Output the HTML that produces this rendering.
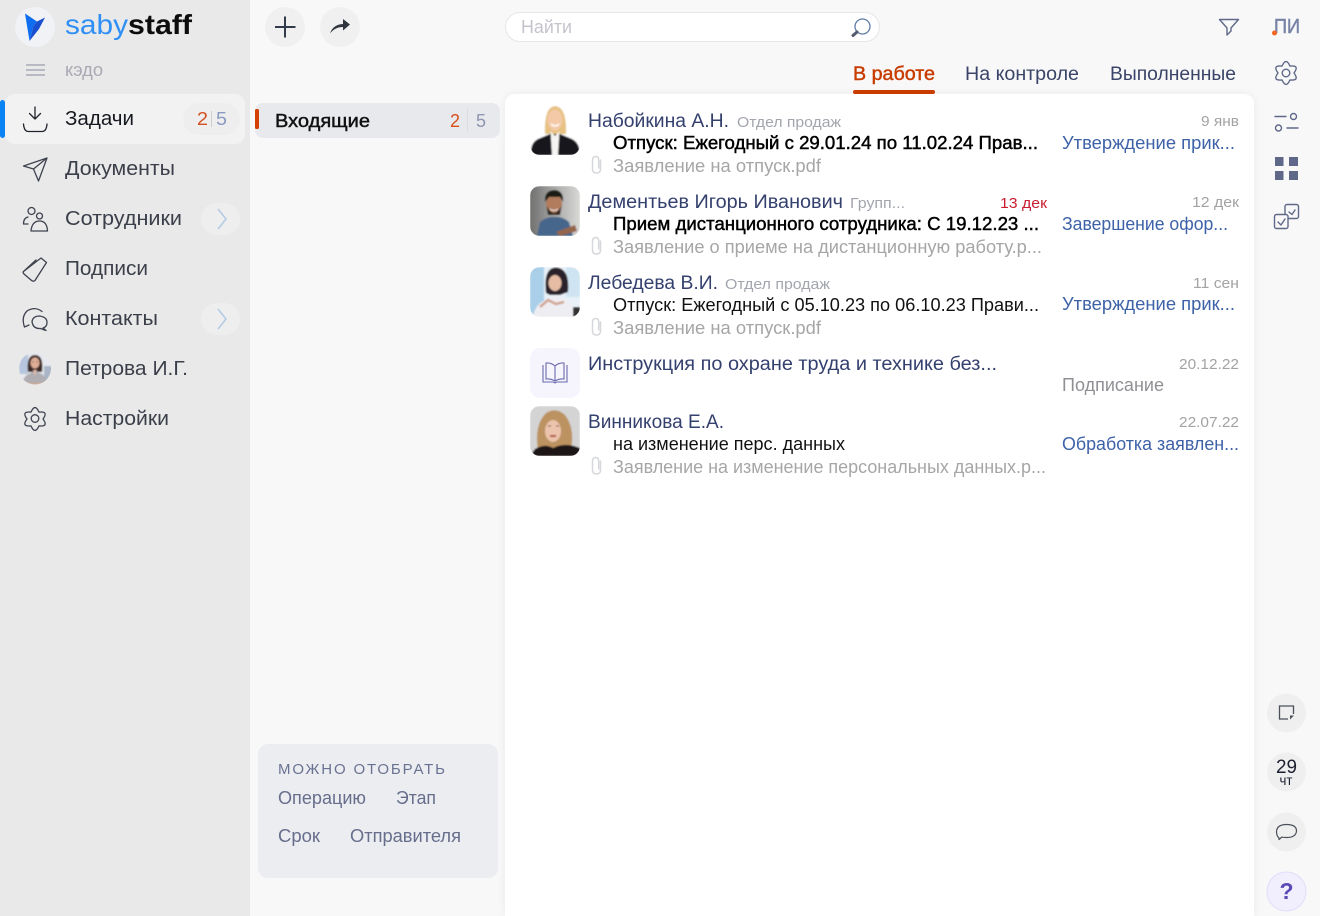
<!DOCTYPE html>
<html lang="ru"><head><meta charset="utf-8"><title>Saby Staff</title>
<style>
html,body{margin:0;padding:0;background:#f8f8f8;width:1320px;height:916px;overflow:hidden}
svg{display:block}
text{font-family:"Liberation Sans",sans-serif;white-space:pre}
.n{font-size:20px;fill:#3b3f4a}
.nm{font-size:19px;fill:#34406e}
.sm{font-size:15px;fill:#a3a5ae}
.b{font-size:18px;fill:#000;stroke:#000;stroke-width:.45px}
.r{font-size:18px;fill:#111}
.g{font-size:18px;fill:#a6a6a6}
.st{font-size:18px;fill:#3e62a8}
.d{font-size:15px;fill:#a3a3a3}
.ic{fill:none;stroke:#3f4350;stroke-width:1.3;stroke-linecap:round;stroke-linejoin:round}
.ir{fill:none;stroke:#5f6888;stroke-width:1.4;stroke-linecap:round;stroke-linejoin:round}
.f{font-size:18px;fill:#666e8c}
.clip{fill:none;stroke:#d6d7da;stroke-width:1.500;stroke-linecap:round}
</style></head><body>
<svg width="1320" height="916" viewBox="0 0 1320 916" xmlns="http://www.w3.org/2000/svg">
<defs>
<clipPath id="a1"><rect x="530" y="105" width="50" height="50" rx="10"/></clipPath>
<clipPath id="a2"><rect x="530" y="186" width="50" height="50" rx="10"/></clipPath>
<clipPath id="a3"><rect x="530" y="267" width="50" height="50" rx="10"/></clipPath>
<clipPath id="a5"><rect x="530" y="406" width="50" height="50" rx="10"/></clipPath>
<clipPath id="a6"><circle cx="35" cy="368.500" r="16"/></clipPath>
<filter id="bl" x="-20%" y="-20%" width="140%" height="140%"><feGaussianBlur stdDeviation="0.7"/></filter>
<filter id="sh" x="-5%" y="-5%" width="110%" height="110%"><feDropShadow dx="0" dy="0" stdDeviation="4" flood-color="#000" flood-opacity="0.06"/></filter>
<linearGradient id="g2" x1="0" x2="1" y1="0" y2="0"><stop offset="0" stop-color="#6f6f6e"/><stop offset=".5" stop-color="#a9a9a8"/><stop offset="1" stop-color="#d8d8d6"/></linearGradient>
<path id="gear" d="M-4-6.900Q0-16 4-6.900Q13.900-8 8 0Q13.900 8 4 6.900Q0 16-4 6.900Q-13.900 8-8 0Q-13.900-8-4-6.900Z"/>
<path id="pc" d="M600.500 160V169Q600.500 173 596.500 173Q592.500 173 592.500 169V160Q592.500 156.500 596 156.500Q598.700 156.500 598.700 160V168"/>
</defs>

<!-- backgrounds -->
<rect x="0" y="0" width="250" height="916" fill="#e9e9e9"/>
<rect x="250" y="0" width="1070" height="916" fill="#f8f8f8"/>
<path d="M505 916V104a10 10 0 0 1 10-10H1244a10 10 0 0 1 10 10V916Z" fill="#fff" filter="url(#sh)"/>

<!-- logo -->
<circle cx="35" cy="27" r="20" fill="#f1f2f6"/>
<path d="M25 13.500L37 21.500L33.500 26L29.500 41Z" fill="#0f6ef0"/>
<path d="M37 21.500L45 17.500L39 29L29.500 41L33.500 26Z" fill="#1a4fd0"/>
<text x="65" y="34" font-size="28" fill="#2f8ff5" textLength="63" lengthAdjust="spacingAndGlyphs">saby</text>
<text x="128" y="34" font-size="28" font-weight="bold" fill="#0c0c0c" textLength="64" lengthAdjust="spacingAndGlyphs">staff</text>

<!-- menu -->
<path d="M26 65H45M26 70H45M26 75H45" stroke="#9a9ead" stroke-width="1.200" fill="none"/>
<text x="65" y="76" font-size="18" fill="#a9a9b5" textLength="38" lengthAdjust="spacingAndGlyphs">кэдо</text>

<rect x="5" y="94" width="240" height="50" rx="10" fill="#f2f2f2"/>
<rect x="0" y="100" width="5" height="38" rx="2.500" fill="#0a84f5"/>
<rect x="183" y="103" width="57" height="32" rx="16" fill="#eeeeee"/>
<text x="197" y="125" font-size="18" fill="#d2501e" textLength="11" lengthAdjust="spacingAndGlyphs">2</text>
<path d="M211.500 111V127" stroke="#cfcfcf"/>
<text x="216" y="125" font-size="18" fill="#8a9ac0" textLength="11" lengthAdjust="spacingAndGlyphs">5</text>
<text x="65" y="125" class="n" style="fill:#16181f" textLength="69" lengthAdjust="spacingAndGlyphs">Задачи</text>
<text x="65" y="175" class="n" textLength="110" lengthAdjust="spacingAndGlyphs">Документы</text>
<text x="65" y="225" class="n" textLength="117" lengthAdjust="spacingAndGlyphs">Сотрудники</text>
<text x="65" y="275" class="n" textLength="83" lengthAdjust="spacingAndGlyphs">Подписи</text>
<text x="65" y="325" class="n" textLength="93" lengthAdjust="spacingAndGlyphs">Контакты</text>
<text x="65" y="375" class="n" textLength="123" lengthAdjust="spacingAndGlyphs">Петрова И.Г.</text>
<text x="65" y="425" class="n" textLength="104" lengthAdjust="spacingAndGlyphs">Настройки</text>

<rect x="201" y="203" width="39" height="32" rx="16" fill="#eeeeee"/>
<path d="M218 209L226 219L218 229" fill="none" stroke="#b4cbe6" stroke-width="1.600"/>
<rect x="201" y="303" width="39" height="32" rx="16" fill="#eeeeee"/>
<path d="M218 309L226 319L218 329" fill="none" stroke="#b4cbe6" stroke-width="1.600"/>

<!-- menu icons -->
<g class="ic">
<path d="M35 107V119M29.500 113.500L35 119L40.500 113.500" stroke="#20242d"/>
<path d="M23.500 124Q24 131.500 28.500 131.500H42Q46.500 131.500 47 124" stroke="#20242d"/>
<path d="M47 158L23.500 166L33.500 169L38.500 181ZM33.500 169L47 158"/>
<circle cx="31.500" cy="211" r="3.500"/><circle cx="39.500" cy="216" r="3"/>
<path d="M28 217Q23.500 218 23.500 224H28M31 231Q32 221 39.500 221Q47 221 47.500 231Z"/>
<path d="M23.500 271.500L36 260M41 258L46.500 262.500L35 280.500Q33 282 31 280L24 274Q22.500 272.500 23.500 271.500Z"/>
<path d="M24.500 327Q21 317 27 311Q35 306 42 311.500M24.500 327L29 325"/>
<path d="M32 321.500Q33 316 39.500 316Q47 317 47 322.500Q47 327 43 328L46 330.500L40.500 328.500Q33 329 32 321.500Z"/>
<circle cx="35" cy="418.500" r="3.800"/>
<use href="#gear" transform="translate(35 419)"/>
</g>

<!-- petrova avatar -->
<g clip-path="url(#a6)" filter="url(#bl)">
<rect x="19" y="352" width="32" height="34" fill="#e6e9ef"/>
<rect x="19" y="352" width="9" height="22" fill="#b7c6de"/>
<rect x="44" y="366" width="8" height="18" fill="#aab6c8"/>
<path d="M28 372Q26 355 35 355Q44 355 42 372Z" fill="#3d2a27"/>
<ellipse cx="35" cy="363" rx="4.500" ry="5.500" fill="#e0ae98"/>
<path d="M22 386Q23 373 35 372Q47 373 48 386Z" fill="#b0aeb3"/>
<path d="M33 370H37L35 376Z" fill="#e2b9a7"/>
<circle cx="33" cy="362" r="0.600" fill="#333"/><circle cx="37" cy="362" r="0.600" fill="#333"/>
<path d="M26 384H45" stroke="#d4a892" stroke-width="2"/>
</g>

<!-- top buttons -->
<circle cx="285" cy="27" r="20" fill="#f0f0f0"/>
<path d="M285 16.500V37.500M275 27H295.500" stroke="#333a4a" stroke-width="2"/>
<circle cx="340" cy="27" r="20" fill="#f0f0f0"/>
<path d="M330 33.500Q333 24.500 343 24V19L350 24.500L343 30.500V27Q335 27 330 33.500Z" fill="#2f343e"/>

<!-- left column -->
<rect x="255" y="103" width="245" height="35" rx="8" fill="#e8e9ed"/>
<rect x="255" y="109" width="4" height="20" rx="1.500" fill="#d34000"/>
<text x="275" y="127" font-size="18" fill="#111" stroke="#111" stroke-width=".45" textLength="95" lengthAdjust="spacingAndGlyphs">Входящие</text>
<text x="450" y="127" font-size="18" fill="#d84f1c" textLength="10" lengthAdjust="spacingAndGlyphs">2</text>
<path d="M467.500 108V132" stroke="#dcdde0"/>
<text x="476" y="127" font-size="18" fill="#8f97b0" textLength="10" lengthAdjust="spacingAndGlyphs">5</text>

<rect x="258" y="744" width="240" height="134" rx="10" fill="#ecedf1"/>
<text x="278" y="774" font-size="15" fill="#6a7292" textLength="167" lengthAdjust="spacing">МОЖНО ОТОБРАТЬ</text>
<text x="278" y="804" class="f" textLength="88" lengthAdjust="spacingAndGlyphs">Операцию</text>
<text x="396" y="804" class="f" textLength="40" lengthAdjust="spacingAndGlyphs">Этап</text>
<text x="278" y="842" class="f" textLength="42" lengthAdjust="spacingAndGlyphs">Срок</text>
<text x="350" y="842" class="f" textLength="111" lengthAdjust="spacingAndGlyphs">Отправителя</text>

<!-- search -->
<rect x="505.500" y="12.500" width="374" height="29" rx="14.500" fill="#fff" stroke="#e6e6e9"/>
<text x="521" y="33" font-size="18" fill="#c4c4cc" textLength="51" lengthAdjust="spacingAndGlyphs">Найти</text>
<circle cx="862.500" cy="26.500" r="7.500" fill="none" stroke="#5f7ba8" stroke-width="1.300"/>
<path d="M857 32L853 35.500" stroke="#555a6e" stroke-width="3" stroke-linecap="round"/>

<!-- tabs -->
<text x="853" y="80" font-size="19" fill="#c83c00" stroke="#c83c00" stroke-width=".45" textLength="82" lengthAdjust="spacingAndGlyphs">В работе</text>
<rect x="853" y="90" width="82" height="4" rx="2" fill="#c83c00"/>
<text x="965" y="80" font-size="19" fill="#3a4468" textLength="114" lengthAdjust="spacingAndGlyphs">На контроле</text>
<text x="1110" y="80" font-size="19" fill="#3a4468" textLength="126" lengthAdjust="spacingAndGlyphs">Выполненные</text>

<!-- right icons -->
<path d="M1219.500 19.500H1238.500L1231 28V31L1227 35V28Z" fill="none" stroke="#5f6888" stroke-width="1.400" stroke-linejoin="round"/>
<text x="1274" y="33" font-size="20" fill="#7683a6" stroke="#7683a6" stroke-width=".5" textLength="26" lengthAdjust="spacingAndGlyphs">ПИ</text>
<circle cx="1274.500" cy="33" r="2.500" fill="#f26522"/>
<g class="ir">
<circle cx="1286" cy="73" r="3.800"/>
<use href="#gear" transform="translate(1286 73)"/>
<path d="M1275 116.500H1286M1287 128H1298"/>
<circle cx="1293.500" cy="116.500" r="3"/><circle cx="1278.500" cy="128" r="3"/>
<rect x="1285" y="204.500" width="13.500" height="14" rx="2"/>
<path d="M1289 212L1292 214.500L1295 210"/>
<rect x="1274.500" y="214.500" width="13.500" height="14" rx="2" fill="#f8f8f8"/>
<path d="M1278 222L1281 225L1285 219"/>
</g>
<g fill="#5f6888">
<rect x="1275" y="157" width="8.500" height="9"/><rect x="1289" y="157" width="9" height="9"/>
<rect x="1275" y="171" width="8.500" height="9"/><rect x="1289" y="171" width="9" height="9"/>
</g>

<!-- bottom-right -->
<circle cx="1286.500" cy="713" r="19.500" fill="#efefef"/>
<path d="M1288 719H1279.500V706H1293.500V714" fill="none" stroke="#4b4f5a" stroke-width="1.300"/>
<path d="M1290 719.500L1294 715.500H1290Z" fill="#4b4f5a"/>
<circle cx="1286.500" cy="772" r="19.500" fill="#efefef"/>
<text x="1276" y="773" font-size="19" fill="#1c2030" textLength="21" lengthAdjust="spacingAndGlyphs">29</text>
<text x="1279.500" y="785" font-size="14" fill="#1c2030" textLength="13" lengthAdjust="spacingAndGlyphs">чт</text>
<circle cx="1286.500" cy="832" r="19.500" fill="#efefef"/>
<path d="M1279 838Q1276.500 836 1276.500 831.500Q1277 824.500 1286.500 824.500Q1296.500 824.500 1296.500 831Q1296 837.500 1286.500 837.500Q1283 837.500 1282 837L1279 839.500Z" fill="none" stroke="#4b4f5a" stroke-width="1.200" stroke-linejoin="round"/>
<circle cx="1286.500" cy="891.500" r="19.500" fill="#f1eefd" stroke="#e1dcfa"/>
<text x="1286.500" y="899" font-size="23" font-weight="bold" fill="#5b49b5" text-anchor="middle">?</text>

<!-- avatar 1 -->
<g clip-path="url(#a1)" filter="url(#bl)">
<rect x="530" y="105" width="50" height="50" fill="#fff"/>
<path d="M545 134Q544 107 555 106Q567 107 566 134Z" fill="#e6c180"/>
<ellipse cx="555" cy="120" rx="7.500" ry="10.500" fill="#f3c9a8"/>
<path d="M531 155Q530 143 538 139L550 134H560L572 139Q580 143 580 155Z" fill="#15151a"/>
<path d="M550.500 131L552 155H558L559.500 131L555 136Z" fill="#f5f4f2"/>
<path d="M551 124Q555 128 559 124" stroke="#fff" fill="none" stroke-width="1.500"/>
</g>

<!-- avatar 2 -->
<g clip-path="url(#a2)" filter="url(#bl)">
<rect x="530" y="186" width="50" height="50" fill="url(#g2)"/>
<ellipse cx="554" cy="204" rx="8" ry="10.500" fill="#b07c5c"/>
<path d="M545 202Q544 190 555 190Q564 191 563 202L560 197H549Z" fill="#1d1a18"/>
<path d="M546.500 206Q554 220 561.500 206L560 215H548Z" fill="#2b211c"/>
<path d="M550 209Q554 212 558 209" stroke="#eee" fill="none"/>
<path d="M537 236L540 222Q548 216 554 217Q562 216 569 222L573 236Z" fill="#47668c"/>
<path d="M556 232L575 225L577 231L560 236Z" fill="#94664c"/>
</g>

<!-- avatar 3 -->
<g clip-path="url(#a3)" filter="url(#bl)">
<rect x="530" y="267" width="50" height="50" fill="#e8f1f7"/>
<rect x="530" y="267" width="14" height="50" fill="#a9cfe9"/>
<rect x="566" y="267" width="14" height="30" fill="#cfe4f2"/>
<path d="M546 293Q543 268 556 267.500Q570 268 568 292L560 295H550Z" fill="#2a2429"/>
<ellipse cx="555" cy="283" rx="6.500" ry="8" fill="#e6bca4"/>
<path d="M533 317Q535 303 548 299L555 296L563 299Q574 303 576 317Z" fill="#eeedf2"/>
<path d="M540 307L548 300L556 304L564 302" stroke="#d0a591" stroke-width="2.500" fill="none"/>
<rect x="573" y="307" width="7" height="10" fill="#333"/>
</g>

<!-- doc icon tile -->
<rect x="530" y="348" width="50" height="50" rx="10" fill="#f6f5fd"/>
<path d="M555 366V381M555 366Q551 362.500 546 363V379Q551 378.500 555 381Q559 378.500 564 379V363Q559 362.500 555 366ZM543 365V382H553.500L555 383L556.500 382H567V365" fill="none" stroke="#6b69ad" stroke-width="1.100"/>

<!-- avatar 5 -->
<g clip-path="url(#a5)" filter="url(#bl)">
<rect x="530" y="406" width="50" height="50" fill="#d4d4d4"/>
<path d="M538 450Q534 425 546 413Q556 407 565 415Q575 428 571 449Z" fill="#bb9260"/>
<ellipse cx="553" cy="431" rx="8" ry="11" fill="#ecc4ad"/>
<path d="M548 426H551M556 426H559" stroke="#51352b"/>
<path d="M550 436H556" stroke="#b0423d" stroke-width="2"/>
<path d="M530 456L535 449Q545 443 553 448Q563 443 574 446L580 448V456Z" fill="#1b1718"/>
</g>

<!-- item 1 -->
<text x="588" y="127" class="nm" textLength="141" lengthAdjust="spacingAndGlyphs">Набойкина А.Н.</text>
<text x="737" y="127" class="sm" textLength="104" lengthAdjust="spacingAndGlyphs">Отдел продаж</text>
<text x="1201" y="126" class="d" textLength="38" lengthAdjust="spacingAndGlyphs">9 янв</text>
<text x="613" y="149" class="b" textLength="425" lengthAdjust="spacingAndGlyphs">Отпуск: Ежегодный с 29.01.24 по 11.02.24 Прав...</text>
<text x="1062" y="149" class="st" textLength="173" lengthAdjust="spacingAndGlyphs">Утверждение прик...</text>
<use href="#pc" class="clip"/>
<text x="613" y="172" class="g" textLength="208" lengthAdjust="spacingAndGlyphs">Заявление на отпуск.pdf</text>

<!-- item 2 -->
<text x="588" y="208" class="nm" textLength="255" lengthAdjust="spacingAndGlyphs">Дементьев Игорь Иванович</text>
<text x="850" y="208" class="sm" textLength="55" lengthAdjust="spacingAndGlyphs">Групп...</text>
<text x="1000" y="208" font-size="15" fill="#c81e32" textLength="47" lengthAdjust="spacingAndGlyphs">13 дек</text>
<text x="1192" y="207" class="d" textLength="47" lengthAdjust="spacingAndGlyphs">12 дек</text>
<text x="613" y="230" class="b" textLength="426" lengthAdjust="spacingAndGlyphs">Прием дистанционного сотрудника: С 19.12.23 ...</text>
<text x="1062" y="230" class="st" textLength="166" lengthAdjust="spacingAndGlyphs">Завершение офор...</text>
<use href="#pc" class="clip" transform="translate(0 81)"/>
<text x="613" y="253" class="g" textLength="429" lengthAdjust="spacingAndGlyphs">Заявление о приеме на дистанционную работу.р...</text>

<!-- item 3 -->
<text x="588" y="289" class="nm" textLength="130" lengthAdjust="spacingAndGlyphs">Лебедева В.И.</text>
<text x="725" y="289" class="sm" textLength="105" lengthAdjust="spacingAndGlyphs">Отдел продаж</text>
<text x="1193" y="288" class="d" textLength="46" lengthAdjust="spacingAndGlyphs">11 сен</text>
<text x="613" y="311" class="r" textLength="426" lengthAdjust="spacingAndGlyphs">Отпуск: Ежегодный с 05.10.23 по 06.10.23 Прави...</text>
<text x="1062" y="310" class="st" textLength="173" lengthAdjust="spacingAndGlyphs">Утверждение прик...</text>
<use href="#pc" class="clip" transform="translate(0 162)"/>
<text x="613" y="334" class="g" textLength="208" lengthAdjust="spacingAndGlyphs">Заявление на отпуск.pdf</text>

<!-- item 4 -->
<text x="588" y="370" class="nm" textLength="409" lengthAdjust="spacingAndGlyphs">Инструкция по охране труда и технике без...</text>
<text x="1179" y="369" class="d" textLength="60" lengthAdjust="spacingAndGlyphs">20.12.22</text>
<text x="1062" y="391" class="g" style="fill:#8f9095" textLength="102" lengthAdjust="spacingAndGlyphs">Подписание</text>

<!-- item 5 -->
<text x="588" y="428" class="nm" textLength="136" lengthAdjust="spacingAndGlyphs">Винникова Е.А.</text>
<text x="1179" y="427" class="d" textLength="60" lengthAdjust="spacingAndGlyphs">22.07.22</text>
<text x="613" y="450" class="r" textLength="232" lengthAdjust="spacingAndGlyphs">на изменение перс. данных</text>
<text x="1062" y="450" class="st" textLength="177" lengthAdjust="spacingAndGlyphs">Обработка заявлен...</text>
<use href="#pc" class="clip" transform="translate(0 301)"/>
<text x="613" y="473" class="g" textLength="433" lengthAdjust="spacingAndGlyphs">Заявление на изменение персональных данных.р...</text>
</svg>
</body></html>
